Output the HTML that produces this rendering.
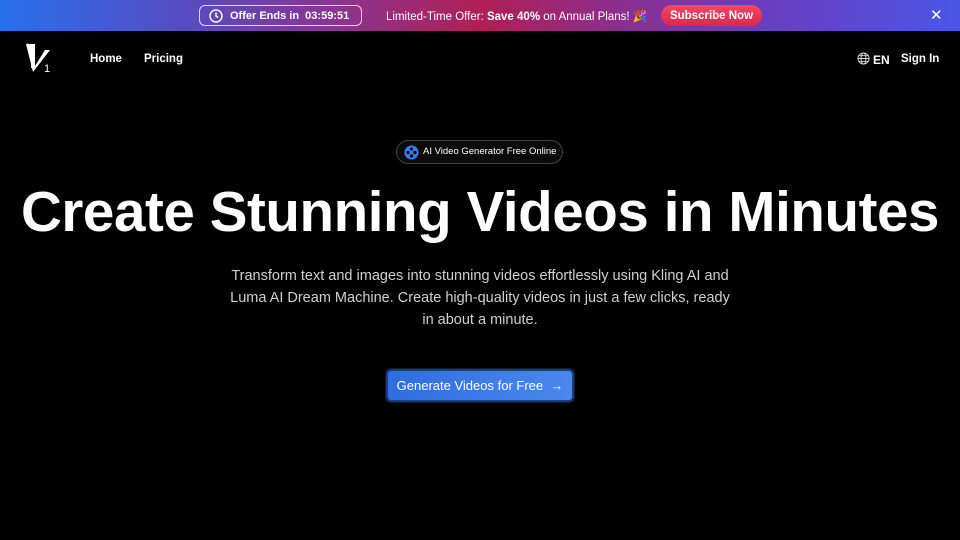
<!DOCTYPE html>
<html><head><meta charset="utf-8"><style>
*{margin:0;padding:0;box-sizing:border-box}
body{width:960px;height:540px;background:#000;font-family:"Liberation Sans",sans-serif;color:#fff;overflow:hidden;position:relative}
div{white-space:nowrap}
.bar{position:absolute;left:0;top:0;width:960px;height:31px;background:linear-gradient(90deg,#2770ec 0%,#5a4ac0 20%,#8a3590 35%,#b01f55 50%,#8a2f90 65%,#6a3ec0 80%,#4a55e6 100%)}
.timer{position:absolute;left:199px;top:5px;width:163px;height:21px;border:1px solid rgba(255,255,255,.8);border-radius:6px;font-size:11px;font-weight:bold;line-height:20px;padding-left:30px}
.timer svg{position:absolute;left:9px;top:3px}
.offer{position:absolute;left:386px;top:9px;font-size:11.5px}
.sub{position:absolute;left:661px;top:5px;width:101px;height:21px;border-radius:11px;background:linear-gradient(#f04a68,#dc2848);font-size:11.5px;font-weight:bold;text-align:center;line-height:22px}
.x{position:absolute;left:930px;top:6px;font-size:15px}
.nav{position:absolute;top:53px;font-size:11.5px;font-weight:bold}
h1{position:absolute;left:0;width:960px;top:179px;text-align:center;font-size:56.5px;font-weight:bold;letter-spacing:-0.4px;white-space:nowrap}
.badge{position:absolute;left:396px;top:140px;width:167px;height:24px;border:1px solid #444;border-radius:12px;font-size:9.5px;line-height:22px;padding-left:26px;background:#0b0b0b}
.p{position:absolute;left:215px;width:530px;top:265px;text-align:center;font-size:14.5px;line-height:22px;color:#d0d0d0;white-space:normal}
.btn{position:absolute;left:386px;top:369px;width:188px;height:33px;border-radius:5px;border:2px solid #1e3b7a;background:linear-gradient(90deg,#2f6de0,#4a88ee);font-size:13px;line-height:29px;text-align:center;box-shadow:0 0 0 1px #0c1a3a}
</style></head><body>
<div class="bar">
<div class="timer"><svg width="14" height="14" viewBox="0 0 14 14"><circle cx="7" cy="7" r="6" fill="none" stroke="#fff" stroke-width="1.4"/><path d="M7 3.5V7l2.2 1.5" fill="none" stroke="#fff" stroke-width="1.4"/></svg>Offer Ends in&nbsp;&nbsp;03:59:51</div>
<div class="offer">Limited-Time Offer: <b>Save 40%</b> on Annual Plans! 🎉</div>
<div class="sub">Subscribe Now</div>
<div class="x">✕</div>
</div>
<svg style="position:absolute;left:25px;top:43px" width="26" height="30" viewBox="0 0 26 30"><path d="M1 1h9l0 22 10-16h5l-17 22z" fill="#fff"/><path d="M2 1l5 4v20" fill="none" stroke="#fff" stroke-width="2"/><text x="19" y="29" font-size="11" fill="#fff" font-family="Liberation Sans">1</text></svg>
<div class="nav" style="left:90px">Home</div>
<div class="nav" style="left:144px">Pricing</div>
<svg style="position:absolute;left:857px;top:52px" width="13" height="13" viewBox="0 0 14 14"><g fill="none" stroke="#ddd" stroke-width="1"><circle cx="7" cy="7" r="6"/><ellipse cx="7" cy="7" rx="2.6" ry="6"/><path d="M1 7h12M2 4h10M2 10h10"/></g></svg>
<div class="nav" style="left:873px;font-size:12px">EN</div>
<div class="nav" style="left:901px">Sign In</div>
<div class="badge"><svg style="position:absolute;left:7px;top:4px" width="15" height="15" viewBox="0 0 16 16"><circle cx="8" cy="8" r="7.5" fill="#3d7ef0"/><g fill="#0b0b0b"><circle cx="8" cy="4.3" r="1.8"/><circle cx="8" cy="11.7" r="1.8"/><circle cx="4.3" cy="8" r="1.8"/><circle cx="11.7" cy="8" r="1.8"/></g></svg>AI Video Generator Free Online</div>
<h1>Create Stunning Videos in Minutes</h1>
<div class="p">Transform text and images into stunning videos effortlessly using Kling AI and<br>Luma AI Dream Machine. Create high-quality videos in just a few clicks, ready<br>in about a minute.</div>
<div class="btn">Generate Videos for Free &nbsp;→</div>
</body></html>
